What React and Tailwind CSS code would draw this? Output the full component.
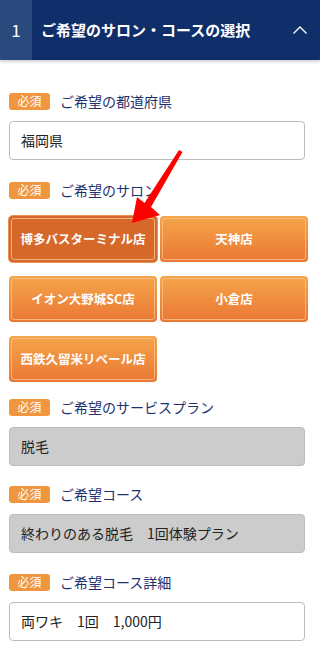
import React from 'react';

const Badge = () => (
  <span className="inline-flex items-center justify-center w-[41px] h-[17px] rounded-[3px] bg-[#f0963f] text-white text-[12px] leading-none">
    必須
  </span>
);

const Label = ({ children }) => (
  <div className="flex items-center gap-[10px] h-[18px]">
    <Badge />
    <span className="text-[14px] text-[#1d3170] leading-none">{children}</span>
  </div>
);

const Field = ({ value, disabled }) => (
  <div
    className={`h-[39px] mt-[11px] w-[296px] flex items-center px-[11px] rounded-[4px] border border-[#bcbcbc] text-[14px] text-[#222] ${
      disabled ? 'bg-[#cccccc]' : 'bg-white'
    }`}
  >
    {value}
  </div>
);

const SalonButton = ({ name, selected }) => (
  <button
    className={`h-[46px] w-[148px] rounded-[4px] p-[2px] text-white font-bold text-[12.5px] ${
      selected
        ? 'bg-[#d6682a] shadow-[0_0_0_1px_#e8914f]'
        : 'bg-gradient-to-b from-[#f5a54b] to-[#e97733]'
    }`}
  >
    <span className="flex h-full w-full items-center justify-center rounded-[3px] border border-[#f7c38d]/80">
      {name}
    </span>
  </button>
);

export default function App() {
  const salons = ['博多バスターミナル店', '天神店', 'イオン大野城SC店', '小倉店', '西鉄久留米リベール店'];

  return (
    <div
      className="relative w-[320px] h-[647px] overflow-hidden bg-white"
      style={{ fontFamily: '"Noto Sans CJK JP", "Liberation Sans", sans-serif' }}
    >
      {/* header */}
      <div className="flex h-[60px] bg-[#0f2e6a] shadow-[0_2px_3px_rgba(0,0,0,0.18)]">
        <div className="w-[32px] flex items-center justify-center bg-[#2a4a7e] text-white text-[17px]">1</div>
        <div className="flex-1 flex items-center pl-[9px] text-white font-bold text-[15px]">
          ご希望のサロン・コースの選択
        </div>
        <div className="w-[40px] flex items-center justify-center">
          <svg width="16" height="10" viewBox="0 0 16 10">
            <path d="M1.5 8.5 L8 2 L14.5 8.5" fill="none" stroke="white" strokeWidth="1.4" />
          </svg>
        </div>
      </div>

      <div className="px-[9px] pt-[32px]">
        <Label>ご希望の都道府県</Label>
        <Field value="福岡県" />

        <div className="mt-[21px]">
          <Label>ご希望のサロン</Label>
        </div>
        <div className="mt-[17px] grid grid-cols-[148px_148px] gap-x-[3px] gap-y-[14px]">
          {salons.map((s, i) => (
            <SalonButton key={s} name={s} selected={i === 0} />
          ))}
        </div>

        <div className="mt-[16px]">
          <Label>ご希望のサービスプラン</Label>
        </div>
        <Field value="脱毛" disabled />

        <div className="mt-[19px]">
          <Label>ご希望コース</Label>
        </div>
        <Field value="終わりのある脱毛　1回体験プラン" disabled />

        <div className="mt-[20px]">
          <Label>ご希望コース詳細</Label>
        </div>
        <Field value="両ワキ　1回　1,000円" />
      </div>

      {/* red arrow annotation */}
      <svg className="absolute left-0 top-0 pointer-events-none" width="320" height="647">
        <path
          d="M179 150 L182.5 152 L151 207 L160 215 L132 223 L137 197 L144.5 203 Z"
          fill="#ff0000"
        />
      </svg>
    </div>
  );
}
